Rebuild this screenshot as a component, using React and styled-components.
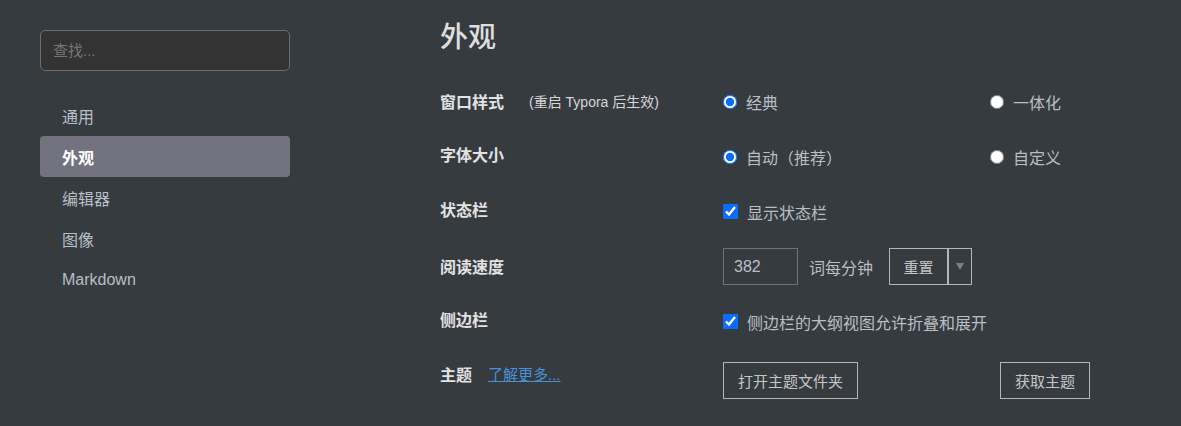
import React from "react";
import styled, { createGlobalStyle } from "styled-components";

const Global = createGlobalStyle`
  html, body { margin: 0; padding: 0; background: #363b40; }
  body { font-family: "Liberation Sans", "Noto Sans CJK SC", sans-serif; color: #b8bfc6; }
  * { box-sizing: border-box; }
`;

const Page = styled.div`
  display: flex;
  width: 1181px;
  height: 426px;
  background: #363b40;
  overflow: hidden;
`;

const Sidebar = styled.aside`
  width: 440px;
  flex: none;
  padding: 30px 0 0 40px;
`;

const Search = styled.input`
  display: block;
  width: 250px;
  height: 41px;
  background: #333333;
  border: 1px solid #6e6e6e;
  border-radius: 5px;
  padding: 0 12px;
  font-family: inherit;
  font-size: 15px;
  color: #ccc;
  outline: none;
  &::placeholder { color: #767676; }
`;

const Nav = styled.nav`
  margin-top: 24px;
  width: 250px;
  display: flex;
  flex-direction: column;
`;

const NavItem = styled.div`
  height: 41px;
  display: flex;
  align-items: center;
  padding-left: 22px;
  border-radius: 4px;
  font-size: 16px;
  background: ${p => (p.$active ? "#73737f" : "transparent")};
  color: ${p => (p.$active ? "#ffffff" : "#b8bfc6")};
  font-weight: ${p => (p.$active ? 700 : 400)};
`;

const Main = styled.main`
  flex: 1;
  padding-top: 20px;
`;

const Title = styled.h1`
  margin: 0 0 19px;
  font-size: 28px;
  line-height: 35px;
  font-weight: 500;
  color: #dedede;
`;

const Row = styled.div`
  display: grid;
  grid-template-columns: 283px 267px 1fr;
  align-items: center;
  height: 55px;
`;

const Label = styled.div`
  display: flex;
  align-items: center;
  font-size: 16px;
  font-weight: 700;
  color: #e2e2e2;
  margin-top: ${p => p.$up || 0}px;
`;

const Note = styled.span`
  font-size: 14px;
  font-weight: 400;
  color: #d6d6d6;
  margin-left: 25px;
`;

const Link = styled.a`
  font-size: 15px;
  font-weight: 400;
  color: #4a90d9;
  text-decoration: underline;
  margin-left: 16px;
`;

const Option = styled.label`
  display: flex;
  align-items: center;
  font-size: 16px;
  color: #b8bfc6;
  gap: 9px;
`;

const Radio = styled.input.attrs({ type: "radio" })`
  margin: 0;
  width: 14px;
  height: 14px;
  accent-color: #0a6cff;
`;

const Check = styled.input.attrs({ type: "checkbox" })`
  margin: 0;
  width: 15px;
  height: 15px;
  accent-color: #0a6cff;
`;

const Controls = styled.div`
  display: flex;
  align-items: center;
  grid-column: span 2;
`;

const NumberBox = styled.div`
  width: 75px;
  height: 37px;
  border: 1px solid #6f7478;
  display: flex;
  align-items: center;
  padding-left: 10px;
  font-size: 16px;
  color: #b8bfc6;
`;

const Unit = styled.span`
  font-size: 16px;
  margin-left: 11px;
  margin-right: 16px;
`;

const SplitButton = styled.div`
  display: flex;
  height: 37px;
  border: 1px solid #b5b5b5;
`;

const SplitMain = styled.div`
  width: 59px;
  display: flex;
  align-items: center;
  justify-content: center;
  font-size: 15px;
  color: #c6c6c6;
  border-right: 2px solid #b5b5b5;
`;

const SplitArrow = styled.div`
  width: 22px;
  display: flex;
  align-items: center;
  justify-content: center;
  &::after {
    content: "";
    border-left: 4px solid transparent;
    border-right: 4px solid transparent;
    border-top: 7px solid #7d7f82;
  }
`;

const Button = styled.div`
  display: inline-flex;
  align-items: center;
  justify-content: center;
  height: 37px;
  padding: 0 14px;
  border: 1px solid #b5b5b5;
  font-size: 15px;
  color: #c6c6c6;
  justify-self: ${p => (p.$right ? "end" : "start")};
  margin-right: ${p => (p.$right ? "91px" : "0")};
  margin-top: 7px;
`;

export default function App() {
  return (
    <>
      <Global />
      <Page>
        <Sidebar>
          <Search placeholder="查找..." />
          <Nav>
            <NavItem>通用</NavItem>
            <NavItem $active>外观</NavItem>
            <NavItem>编辑器</NavItem>
            <NavItem>图像</NavItem>
            <NavItem>Markdown</NavItem>
          </Nav>
        </Sidebar>
        <Main>
          <Title>外观</Title>
          <Row>
            <Label $up={-2}>
              窗口样式<Note>(重启 Typora 后生效)</Note>
            </Label>
            <Option>
              <Radio name="w" defaultChecked />经典
            </Option>
            <Option>
              <Radio name="w" />一体化
            </Option>
          </Row>
          <Row>
            <Label $up={-6}>字体大小</Label>
            <Option>
              <Radio name="f" defaultChecked />自动（推荐）
            </Option>
            <Option>
              <Radio name="f" />自定义
            </Option>
          </Row>
          <Row>
            <Label $up={-6}>状态栏</Label>
            <Controls>
              <Option>
                <Check defaultChecked />显示状态栏
              </Option>
            </Controls>
          </Row>
          <Row>
            <Label $up={-2}>阅读速度</Label>
            <Controls>
              <NumberBox>382</NumberBox>
              <Unit>词每分钟</Unit>
              <SplitButton>
                <SplitMain>重置</SplitMain>
                <SplitArrow />
              </SplitButton>
            </Controls>
          </Row>
          <Row>
            <Label $up={-6}>侧边栏</Label>
            <Controls>
              <Option>
                <Check defaultChecked />侧边栏的大纲视图允许折叠和展开
              </Option>
            </Controls>
          </Row>
          <Row>
            <Label $up={-6}>
              主题<Link href="#">了解更多...</Link>
            </Label>
            <Button>打开主题文件夹</Button>
            <Button $right>获取主题</Button>
          </Row>
        </Main>
      </Page>
    </>
  );
}
